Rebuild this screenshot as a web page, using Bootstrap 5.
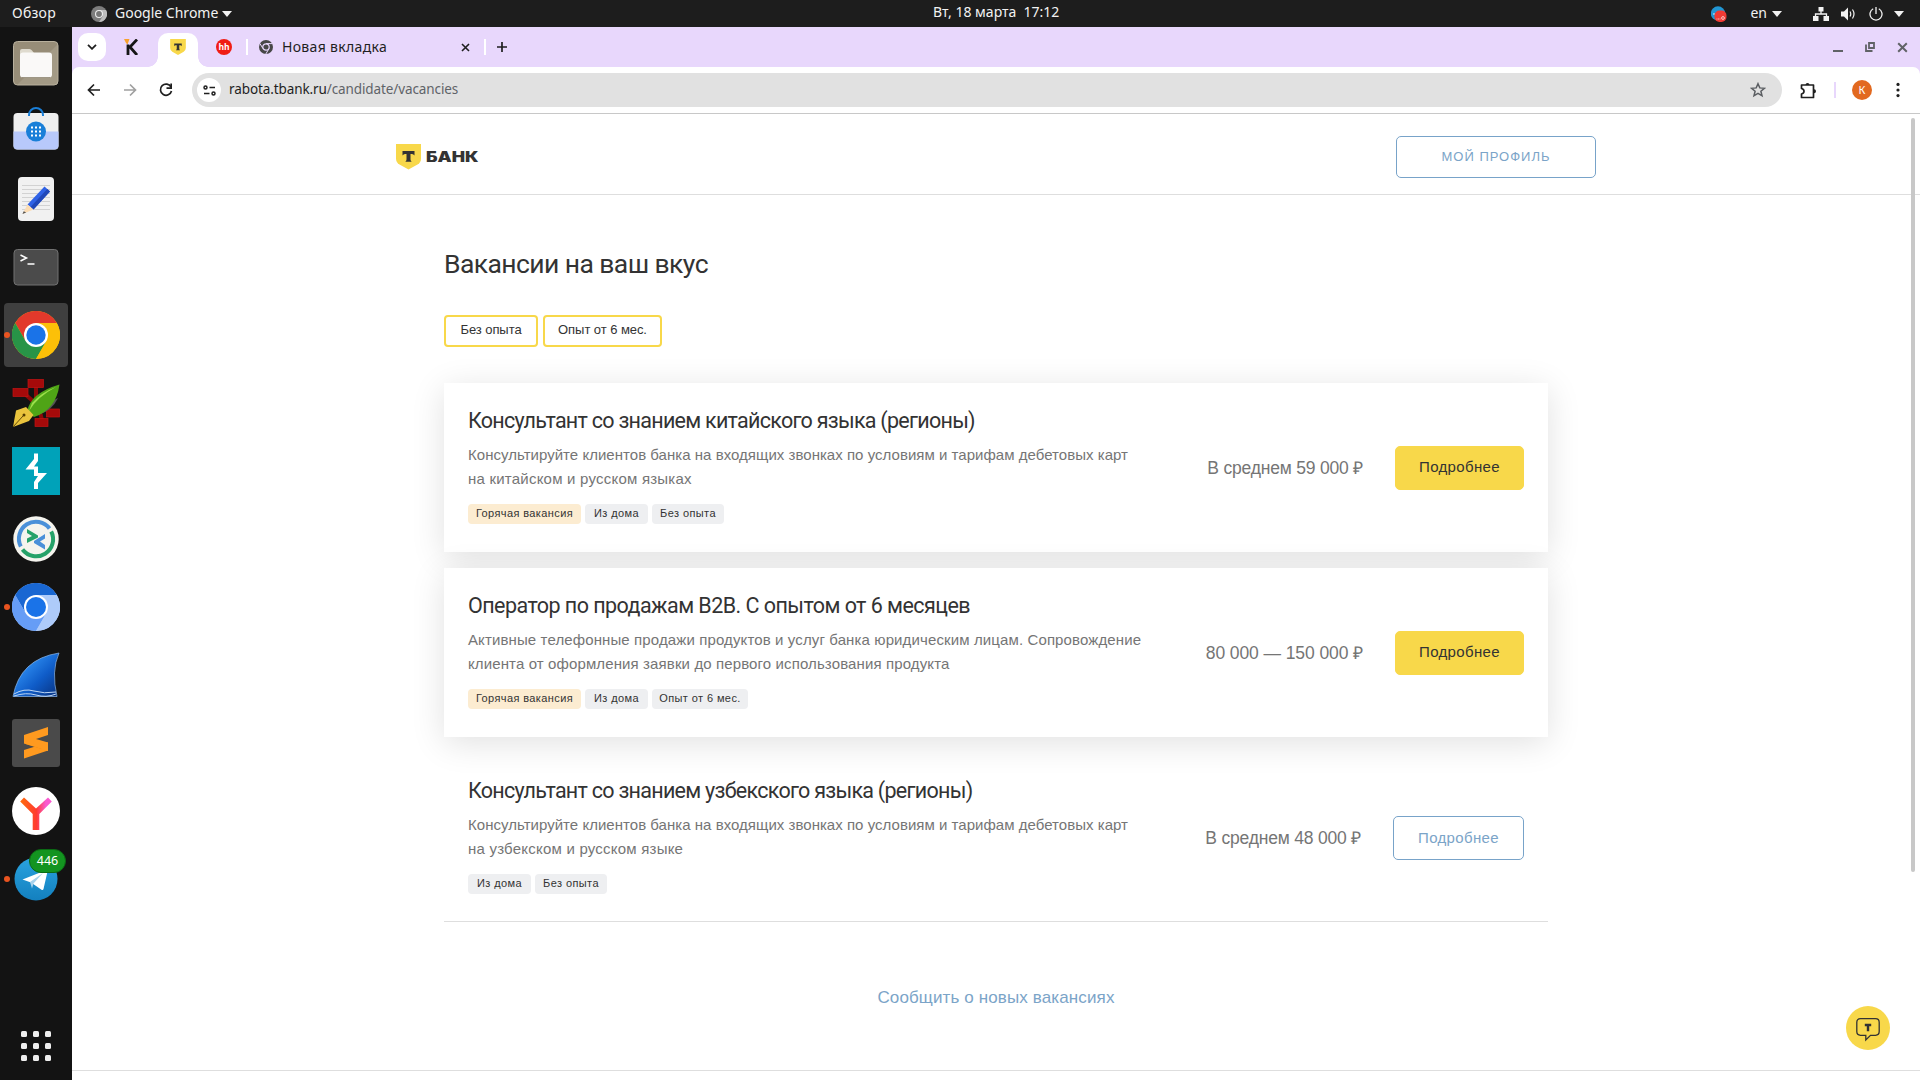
<!DOCTYPE html>
<html lang="ru">
<head>
<meta charset="utf-8">
<title>Вакансии</title>
<link href="https://cdn.jsdelivr.net/npm/bootstrap@5.3.0/dist/css/bootstrap.min.css" rel="stylesheet">
<style>
html,body{height:1080px;overflow:hidden}
body{font-family:"Liberation Sans",Arial,sans-serif;color:#333;background:#fff;width:1920px}
svg{display:block;flex:none}
.sysfont{font-family:"Noto Sans","Open Sans",sans-serif}
.topbar{height:27px;background:#1d1d1d;color:#f2f2f2;font-size:14px;line-height:25px;white-space:nowrap}
.topbar-left{width:933px;padding-left:12px;flex:none}
.topbar-left,.topbar-right{height:27px}
.topbar-left span,.topbar-right span{padding-bottom:2px}
.activities{letter-spacing:.26px}
.clock{white-space:pre}
.dock{width:72px;background:#131313;padding-top:4px;flex:none}
.dock-item{width:64px;height:64px;margin:0 4px 4px;border-radius:4px;flex:none}
.dock-item.current{background:#3f3f3f}
.run-dot{left:0;top:29px;width:6px;height:6px;border-radius:50%;background:#e95420}
.unread{left:25px;top:2px;width:37px;height:24px;border-radius:12px;background:#139420;color:#fff;font-size:12.5px;border:1px solid #0b6a14;line-height:22px}
.apps{padding-bottom:19px}
.tabstrip{height:40px;background:#e8d7fc;padding-left:6px}
.tab-search{width:28px;height:28px;border-radius:10px;background:#fff}
.tab-active{width:40px;height:34px;background:#fff;border-radius:10px 10px 0 0;margin:6px 18px 0 20px}
.tab-active::before,.tab-active::after{content:"";position:absolute;bottom:0;width:10px;height:10px}
.tab-active::before{left:-10px;background:radial-gradient(circle at 0 0,transparent 9.5px,#fff 10px)}
.tab-active::after{right:-10px;background:radial-gradient(circle at 100% 0,transparent 9.5px,#fff 10px)}
.hh{width:16px;height:16px;border-radius:50%;background:#f01d14;color:#fff;font:bold 8.5px/15px "Open Sans",sans-serif}
.tab-sep{width:2px;height:16px;background:#fff;margin-left:14px}
.tab-name{font-size:14px;color:#1f1f1f;white-space:nowrap;letter-spacing:.32px;padding-bottom:2px;margin-left:9px}
.toolwrap{background:#e8d7fc}
.toolbar{height:47px;background:#fff;border-bottom:1px solid #c8c8c8;border-radius:7px 7px 0 0;padding-left:14px}
.omnibox{width:1590px;height:34px;border-radius:17px;background:#e1e1e1;padding:0 16px 0 5px;margin-left:18px}
.site-info{width:24px;height:24px;border-radius:50%;background:#fff}
.url{font-size:13.5px;color:#1f1f1f;white-space:nowrap;letter-spacing:-.1px;padding-bottom:2px;margin-left:8px}
.url span{color:#5f6368}
.ext-sep{width:2px;height:16px;background:#e8d7fc;margin:0 16px 0 17px}
.avatar{width:20px;height:20px;border-radius:50%;background:#e2691f;color:#fff;font-size:11px;line-height:20px}
.site-header{height:81px;border-bottom:1px solid #dedede;padding-top:6px}
.site-wide{width:1200px}
.btn-site{--bs-btn-border-radius:5px;--bs-btn-color:#7ba4c8;--bs-btn-border-color:#78a3c9;--bs-btn-padding-x:0;--bs-btn-padding-y:0;white-space:nowrap}
.btn-profile{width:200px;height:42px;font-size:13px;line-height:40px;letter-spacing:1px}
.content-col{width:1104px}
.page-title{font-family:Roboto,sans-serif;font-size:26.5px;line-height:32px;font-weight:400;letter-spacing:-.58px;margin:53px 0 35px;white-space:nowrap}
.filters{gap:5px;margin-bottom:36px}
.filter-chip{width:119px;height:32px;border:2px solid #f8d84a;border-radius:4px;font-size:13px;line-height:26px;letter-spacing:-.06px;color:#333;text-align:center;white-space:nowrap}
.filter-chip.short{width:94px}
.vacancy{height:169px;padding:24px 24px 0;background:#fff}
.vacancy.raised{box-shadow:0 6px 32px rgba(0,0,0,.12);margin-bottom:16px}
.vacancy.flat{border-bottom:1px solid #dedede;background:none}
.vac-title{font-family:Roboto,sans-serif;font-size:21.5px;line-height:28px;font-weight:400;letter-spacing:-.73px;margin:0 0 8px;white-space:nowrap}
.vac-title.mixed{letter-spacing:-.55px}
.vac-text{font-size:15px;line-height:24px;color:#757575;margin:0 0 13px;white-space:nowrap;letter-spacing:.12px}
.vac-text .tight{letter-spacing:.03px}
.vac-text .loose{letter-spacing:.22px}
.vac-tag{height:20px;border-radius:4px;background:#eeeff1;font-size:11px;line-height:19px;letter-spacing:.4px;text-align:center;white-space:nowrap}
.vac-tag.hot{background:#fcecd1;width:113px}
.tag-home{width:63px}
.tag-novice{width:72px}
.tag-exp{width:96px}
.salary{font-size:17.5px;line-height:24px;color:#757575;white-space:nowrap;letter-spacing:-.2px}
.salary.range{letter-spacing:-.09px}
.vac-side{height:44px;margin-top:39px;gap:32px}
.btn-more{width:129px;height:44px;font-size:15px;line-height:40px;letter-spacing:.35px}
.btn-fill{--bs-btn-bg:#f8d84a;--bs-btn-border-color:#f8d84a;--bs-btn-color:#333}
.btn-line{width:131px;line-height:42px}
.notify{font-size:17px;color:#7ba4c8;text-decoration:none;white-space:nowrap;line-height:24px;letter-spacing:.12px;margin-top:64px}
.page-end{border-top:1px solid #dedede;height:10px}
.scroll-thumb{left:1911px;top:118px;width:4px;height:754px;border-radius:2px;background:#c8c8c8}
.chat-btn{left:1846px;top:1006px;width:44px;height:44px}
</style>
<script src="https://cdn.jsdelivr.net/npm/bootstrap@5.3.0/dist/js/bootstrap.bundle.min.js"></script>
</head>
<body class="d-flex flex-column position-relative">
<svg width="0" height="0" class="position-absolute"><defs>
<g id="shield"><path d="M0 0h25v14.500q0 4-3.500 6L12.500 25.500 3.500 20.500Q0 18.500 0 14.500z" fill="#f8d84a"/><path d="M6.500 7h12v4.500q-1-1.500-2.500-1.500h-1.500v5.500q0 1.500 1.200 2.300H9.300q1.200-.8 1.200-2.300V10H9q-1.500 0-2.500 1.500z" fill="#333"/></g>
</defs></svg>

<header class="topbar sysfont d-flex align-items-center">
  <div class="topbar-left d-flex align-items-center">
    <span class="activities">Обзор</span>
    <svg width="16" height="16" viewBox="0 0 16 16" style="margin-left:35px"><circle cx="8" cy="8" r="8" fill="#7d7d7d"/><path d="M8 4h7a8 8 0 0 1-7 12l4-6z" fill="#bdbdbd"/><circle cx="8" cy="8" r="4" fill="#eee"/><circle cx="8" cy="8" r="2.900" fill="#777"/></svg>
    <span class="ms-1 ps-1">Google Chrome</span>
    <svg width="10" height="6" viewBox="0 0 10 6" class="ms-1"><path d="M0 0h10L5 6z" fill="#f2f2f2"/></svg>
  </div>
  <span class="clock pb-1">Вт, 18 марта  17:12</span>
  <div class="topbar-right flex-grow-1 d-flex align-items-center justify-content-end" style="padding-right:16px">
    <svg width="16" height="16" viewBox="0 0 16 16"><circle cx="7" cy="7.500" r="7.200" fill="#2196d3"/><circle cx="3" cy="8" r=".8" fill="#fff"/><rect x="3.500" y="4.500" width="12" height="11.500" rx="5" fill="#f03a34"/><path d="M5.500 13h4" stroke="#f9b5b2" stroke-dasharray="1 .5"/><circle cx="12" cy="12" r="1.400" fill="none" stroke="#f9c5c2"/></svg>
    <span style="margin-left:23px">en</span>
    <svg width="10" height="6" viewBox="0 0 10 6" style="margin-left:5px"><path d="M0 0h10L5 6z" fill="#f2f2f2"/></svg>
    <svg width="16" height="14" viewBox="0 0 16 14" style="margin-left:31px"><path d="M5.500 0h5v4.500h-5zM0 9h5.500v5H0zM10.500 9H16v5h-5.500z" fill="#f2f2f2"/><path d="M8 4v3M2.500 9.500V7h11v2.500" fill="none" stroke="#f2f2f2" stroke-width="1.300"/></svg>
    <svg width="15" height="14" viewBox="0 0 15 14" style="margin-left:12px"><path d="M0 4.500h3L7 .5v13l-4-4H0z" fill="#f2f2f2"/><path d="M9 4.500q1.500 2.500 0 5M11.500 2.500q3 4.500 0 9" fill="none" stroke="#f2f2f2" stroke-width="1.200"/></svg>
    <svg width="14" height="14" viewBox="0 0 14 14" style="margin-left:13px"><path d="M4.200 1.800A6 6 0 1 0 9.800 1.800M7 0v7" fill="none" stroke="#f2f2f2" stroke-width="1.300"/></svg>
    <svg width="10" height="6" viewBox="0 0 10 6" style="margin-left:11px"><path d="M0 0h10L5 6z" fill="#f2f2f2"/></svg>
  </div>
</header>

<div class="d-flex flex-grow-1">
<nav class="dock d-flex flex-column">
  <div class="dock-item d-flex align-items-center justify-content-center"><svg width="48" height="48"><rect x="1.500" y="2.500" width="44.500" height="43.500" rx="4" fill="#978d78"/><path d="M5 46 46 5v37q0 4-4 4z" fill="#a39a86"/><rect x="1.500" y="2.500" width="44.500" height="43.500" rx="4" fill="none" stroke="#b8b09d"/><path d="M8 12q0-2 2-2h7.500q1.500 0 2.500 1.500l2 2.500V20H8z" fill="#dfdbcf"/><rect x="8" y="13.500" width="32" height="25" rx="3" fill="#faf9f8"/><path d="M10 38.500h28" stroke="#7d745f" stroke-width=".6"/></svg></div>
  <div class="dock-item d-flex align-items-center justify-content-center"><svg width="48" height="48"><rect x="1.500" y="6" width="45" height="36.500" rx="4" fill="#efefef"/><path d="M1.500 24.500h45v14q0 4-4 4h-37q-4 0-4-4z" fill="#b8c9fb"/><path d="M17 9V8a7 7 0 0 1 14 0v1" fill="none" stroke="#1a7fd8" stroke-width="2"/><circle cx="24" cy="24.500" r="10" fill="#1a7fd8"/><path d="M19 20.500h10M19 24.500h10M19 28.500h10" stroke="#fff" stroke-width="2" stroke-dasharray="2 2"/></svg></div>
  <div class="dock-item d-flex align-items-center justify-content-center"><svg width="48" height="48"><rect x="6" y="2" width="36" height="44" rx="4" fill="#f1f1f1"/><path d="M10 10.500h28M10 14.500h28M10 18.500h28M10 22.500h28M10 26.500h28M10 30.500h28M10 34.500h28" stroke="#d2d2d2"/><path d="M15.500 29.500 32.500 11.500l5.500 5L21.500 34.500z" fill="#2f62e6"/><path d="M18.500 32 35.300 14l2.700 2.500L21.500 34.500z" fill="#2148b8"/><path d="M15.500 29.500l6 5L10.500 39z" fill="#fbdcb4"/><path d="M11.700 36.300l2.500 1.300-3.700 1.400z" fill="#555"/></svg></div>
  <div class="dock-item d-flex align-items-center justify-content-center"><svg width="48" height="48"><rect x="2" y="6.500" width="44" height="35.500" rx="3.500" fill="#4b4b4b" stroke="#727272"/><path d="M8.500 12l6 3-6 3M15.500 21h7" fill="none" stroke="#fff" stroke-width="1.500"/></svg></div>
  <div class="dock-item current position-relative d-flex align-items-center justify-content-center"><i class="run-dot position-absolute"></i><svg width="48" height="48"><circle cx="24" cy="24" r="24" fill="#fcc008"/><path d="M3.200 12A24 24 0 0 1 44.800 12H24L13.600 30z" fill="#e2392b"/><path d="M3.200 12A24 24 0 0 0 24 48L34.400 30 24 24 13.600 30z" fill="#289447"/><path d="M24 12h20.800A24 24 0 0 1 24 48l10.400-18z" fill="#fcc008"/><circle cx="24" cy="24" r="12" fill="#fff"/><circle cx="24" cy="24" r="9.700" fill="#1a73e8"/></svg></div>
  <div class="dock-item d-flex align-items-center justify-content-center"><svg width="48" height="48"><path d="M24 7v12M14 16l8 7M34 30l6 4M28 33l2 8" stroke="#8d0808" stroke-width="4"/><g fill="#a50a0a" stroke="#c51313" stroke-width=".7"><rect x="16" y=".5" width="15.500" height="8" /><rect x="1" y="9.500" width="15" height="8"/><rect x="34.500" y="30" width="13" height="8"/><rect x="23" y="39.500" width="13" height="8"/></g><path d="M26 36q14-4 20-17l-8 4z" fill="#555"/><path d="M15 33Q18 14 47.500 5.500 44 31 22 38z" fill="#4fa416"/><path d="M17 32Q25 18 44 8 30 13 20 24z" fill="#9be04a"/><path d="M4 31.500l10-3.500 7.500 8-4.500 6L1 48z" fill="#eac43d"/><path d="M1 48 11 37" stroke="#664b07"/><circle cx="12" cy="36" r="1.500" fill="#553c00"/></svg></div>
  <div class="dock-item d-flex align-items-center justify-content-center"><svg width="48" height="48"><path d="M0 0h48v48H0z" fill="#00a2b9"/><path d="M22 6.500h4V14l-4 5.500h4V26h9L26 36v6h-4v-7l4-6h-4v-6.500h-8.500L22 12z" fill="#fff"/></svg></div>
  <div class="dock-item d-flex align-items-center justify-content-center"><svg width="48" height="48"><circle cx="24" cy="24" r="22.700" fill="#f5f4ee"/><g fill="none" stroke-width="4"><path d="M8.800 31.500A17 17 0 0 1 37.500 13.500" stroke="#4a90d9"/><path d="M39.200 16.500A17 17 0 0 1 10.500 34.500" stroke="#26a269"/></g><path d="M15 14l11 6.500v2L15 28v-4.500l5-2.500-5-3z" fill="#26a269"/><path d="M33 19v4.500l-5 3 5 3.500v4.500L22 28v-2z" fill="#4a90d9"/></svg></div>
  <div class="dock-item position-relative d-flex align-items-center justify-content-center"><i class="run-dot position-absolute"></i><svg width="48" height="48"><circle cx="24" cy="24" r="24" fill="#aecbfa"/><path d="M3.200 12A24 24 0 0 1 44.800 12H24L13.600 30z" fill="#1967d2"/><path d="M3.200 12A24 24 0 0 0 24 48L34.400 30 24 24 13.600 30z" fill="#669df6"/><path d="M24 12h20.800A24 24 0 0 1 24 48l10.400-18z" fill="#aecbfa"/><circle cx="24" cy="24" r="12" fill="#fff"/><circle cx="24" cy="24" r="10" fill="#1a73e8"/></svg></div>
  <div class="dock-item d-flex align-items-center justify-content-center"><svg width="48" height="48"><defs><linearGradient id="fin" x1="0" y1="0" x2="1" y2="1"><stop offset=".25" stop-color="#2d8cf0"/><stop offset=".6" stop-color="#0f5cc8"/><stop offset="1" stop-color="#08307c"/></linearGradient></defs><path d="M1 45.500Q8 8 47 2q-8 18-2 43.500z" fill="url(#fin)" stroke="#8db8ea" stroke-width=".7"/><path d="M2 43q10-6 20-3t22 1M2 45q12-4 22-1t20-1" fill="none" stroke="#bcd6f5" stroke-width="1"/></svg></div>
  <div class="dock-item d-flex align-items-center justify-content-center"><svg width="48" height="48"><rect width="48" height="48" rx="3" fill="#4a4a4a"/><path d="M36 23.500 12 31v8.500l24-8z" fill="#ff9a1f"/><path d="M12 24.500 30 30l6-2v-4.500z" fill="#e3800c"/><path d="M36 8 12 16v8.500l24 7.500v-8.500L24 20l12-4z" fill="#ff9a1f"/></svg></div>
  <div class="dock-item d-flex align-items-center justify-content-center"><svg width="48" height="48"><defs><linearGradient id="yg" gradientUnits="userSpaceOnUse" x1="9" y1="12" x2="40" y2="12"><stop offset="0" stop-color="#ff6a0d"/><stop offset=".5" stop-color="#ff3b30"/><stop offset=".8" stop-color="#f95ad0"/></linearGradient></defs><circle cx="24" cy="24" r="24" fill="#fff"/><path d="M8.200 14.500 12 10.500 24 21.500 36 10.500l3.800 4L27.300 27v16h-6.600V27z" fill="url(#yg)"/></svg></div>
  <div class="dock-item position-relative d-flex align-items-center justify-content-center"><i class="run-dot position-absolute"></i><svg width="48" height="48"><defs><linearGradient id="tg" x1="0" y1="0" x2="0" y2="1"><stop offset="0" stop-color="#2aa3df"/><stop offset="1" stop-color="#1380bf"/></linearGradient></defs><circle cx="24" cy="24" r="21.500" fill="url(#tg)"/><path d="M10.500 24.500 34.500 15q1.500-.3 1 1.500L31.500 34q-.5 1.500-2 .7L19 27.500z" fill="#fff"/><path d="M18 27l13-9-9.500 10.500-1.500 5z" fill="#a8d2ec"/></svg><span class="unread sysfont position-absolute text-center">446</span></div>
  <div class="apps mt-auto d-flex justify-content-center"><svg width="30" height="30"><g fill="#efefef"><rect width="6" height="6" rx="1.500"/><rect x="12" width="6" height="6" rx="1.500"/><rect x="24" width="6" height="6" rx="1.500"/><rect y="12" width="6" height="6" rx="1.500"/><rect x="12" y="12" width="6" height="6" rx="1.500"/><rect x="24" y="12" width="6" height="6" rx="1.500"/><rect y="24" width="6" height="6" rx="1.500"/><rect x="12" y="24" width="6" height="6" rx="1.500"/><rect x="24" y="24" width="6" height="6" rx="1.500"/></g></svg></div>
</nav>

<div class="d-flex flex-column flex-grow-1">
<div class="tabstrip d-flex align-items-center sysfont">
  <div class="tab-search d-flex align-items-center justify-content-center"><svg width="10" height="6" viewBox="0 0 10 6"><path d="M1 .8l4 4 4-4" fill="none" stroke="#1f1f1f" stroke-width="1.800"/></svg></div>
  <svg width="14" height="16" viewBox="0 0 14 16" style="margin-left:18px"><path d="M0 0h5.500L3.500 5.500 2 4z" fill="#f7a12c"/><path d="M4 5.500V16M13 .5 6 8l7 8" fill="none" stroke="#161616" stroke-width="2.800"/></svg>
  <div class="tab-active position-relative d-flex align-items-center justify-content-center"><svg width="16" height="16" viewBox="0 0 25 25.500" style="margin-top:-6px"><use href="#shield"/></svg></div>
  <div class="hh text-center">hh</div>
  <div class="tab-sep"></div>
  <svg width="14" height="14" viewBox="0 0 14 14" style="margin-left:11px"><circle cx="7" cy="7" r="7" fill="#474747"/><circle cx="7" cy="7" r="3.200" fill="#474747" stroke="#e8d7fc" stroke-width="1.200"/><path d="M7 3.600h6.500M4 8.600.9 3.500M10 8.600 6.800 14" stroke="#e8d7fc" stroke-width="1"/></svg>
  <span class="tab-name">Новая вкладка</span>
  <svg width="9" height="9" viewBox="0 0 9 9" style="margin-left:74px"><path d="M1 1l7 7M8 1 1 8" stroke="#1f1f1f" stroke-width="1.600"/></svg>
  <div class="tab-sep"></div>
  <svg width="12" height="12" viewBox="0 0 12 12" style="margin-left:10px"><path d="M6 1v10M1 6h10" stroke="#1f1f1f" stroke-width="1.700"/></svg>
  <div class="ms-auto d-flex align-items-center" style="padding-right:12px">
    <svg width="10" height="10" viewBox="0 0 10 10"><path d="M0 9h10" stroke="#606266" stroke-width="2"/></svg>
    <svg width="10" height="10" viewBox="0 0 10 10" style="margin-left:22px"><path d="M1 2.500V9h6.500M4 1h5v5H4z" fill="none" stroke="#606266" stroke-width="1.800"/></svg>
    <svg width="11" height="11" viewBox="0 0 11 11" style="margin-left:22px"><path d="M1.200 1.200l8.600 8.600M9.800 1.200 1.200 9.800" stroke="#606266" stroke-width="2"/></svg>
  </div>
</div>
<div class="toolwrap"><div class="toolbar sysfont d-flex align-items-center">
  <svg width="16" height="16" viewBox="0 0 16 16"><path d="M14 8H3M8 2.500 2.500 8 8 13.500" fill="none" stroke="#1f1f1f" stroke-width="1.700"/></svg>
  <svg width="16" height="16" viewBox="0 0 16 16" style="margin-left:20px"><path d="M2 8h11M8 2.500 13.500 8 8 13.500" fill="none" stroke="#a0a0a0" stroke-width="1.700"/></svg>
  <svg width="16" height="16" viewBox="0 0 16 16" style="margin-left:20px"><path d="M13 5A5.600 5.600 0 1 0 13.500 9" fill="none" stroke="#1f1f1f" stroke-width="1.700"/><path d="M14 1.500V7H8.500V5.300h3.800V1.500z" fill="#1f1f1f"/></svg>
  <div class="omnibox d-flex align-items-center">
    <div class="site-info d-flex align-items-center justify-content-center"><svg width="13" height="11" viewBox="0 0 13 11" fill="none" stroke="#1f1f1f" stroke-width="1.500"><circle cx="2.500" cy="2.500" r="1.500"/><path d="M6.500 2.500H12M1 8.500h5.500"/><circle cx="10.500" cy="8.500" r="1.500"/></svg></div>
    <span class="url">rabota.tbank.ru<span>/candidate/vacancies</span></span>
    <svg class="ms-auto" width="16" height="16" viewBox="0 0 16 16"><path d="M8 1.700l1.800 4.200 4.600.4-3.500 3 1.100 4.500L8 11.400l-4 2.400 1.100-4.500-3.500-3 4.600-.4z" fill="none" stroke="#5b5e62" stroke-width="1.500"/></svg>
  </div>
  <svg width="17" height="17" viewBox="0 0 17 17" style="margin-left:18px"><path d="M1.500 3h12v12.500h-12v-3.500q2.500-.5 2.500-2.700T1.500 6.500z" fill="none" stroke="#1f1f1f" stroke-width="1.700" stroke-linejoin="round"/><path d="M5.500 3a2 2 0 0 1 4 0zM14 7.200a2 2 0 0 1 0 4z" fill="#1f1f1f"/></svg>
  <div class="ext-sep"></div>
  <div class="avatar text-center">К</div>
  <svg width="4" height="16" viewBox="0 0 4 16" style="margin-left:24px"><g fill="#1f1f1f"><circle cx="2" cy="2.400" r="1.600"/><circle cx="2" cy="8" r="1.600"/><circle cx="2" cy="13.600" r="1.600"/></g></svg>
</div></div>

<main class="flex-grow-1 d-flex flex-column bg-white">
  <div class="site-header d-flex justify-content-center">
    <div class="site-wide d-flex align-items-center justify-content-between">
      <svg width="84" height="26" viewBox="0 0 84 26"><use href="#shield"/><text x="30" y="17.500" font-family="Inter,sans-serif" font-weight="900" font-size="14.200" textLength="52.500" lengthAdjust="spacingAndGlyphs" fill="#333">БАНК</text></svg>
      <a class="btn btn-site btn-profile">МОЙ ПРОФИЛЬ</a>
    </div>
  </div>
  <div class="content-col mx-auto d-flex flex-column flex-grow-1">
    <h1 class="page-title">Вакансии на ваш вкус</h1>
    <div class="filters d-flex"><div class="filter-chip short">Без опыта</div><div class="filter-chip">Опыт от 6 мес.</div></div>

    <article class="vacancy raised d-flex justify-content-between">
      <div>
        <h2 class="vac-title">Консультант со знанием китайского языка (регионы)</h2>
        <p class="vac-text"><span class="tight">Консультируйте клиентов банка на входящих звонках по условиям и тарифам дебетовых карт</span><br><span class="loose">на китайском и русском языках</span></p>
        <div class="d-flex gap-1"><span class="vac-tag hot">Горячая вакансия</span><span class="vac-tag tag-home">Из дома</span><span class="vac-tag tag-novice">Без опыта</span></div>
      </div>
      <div class="vac-side d-flex align-items-center"><span class="salary">В среднем 59 000 ₽</span><a class="btn btn-site btn-more btn-fill">Подробнее</a></div>
    </article>
    <article class="vacancy raised d-flex justify-content-between">
      <div>
        <h2 class="vac-title mixed">Оператор по продажам B2B. С опытом от 6 месяцев</h2>
        <p class="vac-text">Активные телефонные продажи продуктов и услуг банка юридическим лицам. Сопровождение<br>клиента от оформления заявки до первого использования продукта</p>
        <div class="d-flex gap-1"><span class="vac-tag hot">Горячая вакансия</span><span class="vac-tag tag-home">Из дома</span><span class="vac-tag tag-exp">Опыт от 6 мес.</span></div>
      </div>
      <div class="vac-side d-flex align-items-center"><span class="salary range">80 000 — 150 000 ₽</span><a class="btn btn-site btn-more btn-fill">Подробнее</a></div>
    </article>
    <article class="vacancy flat d-flex justify-content-between">
      <div>
        <h2 class="vac-title">Консультант со знанием узбекского языка (регионы)</h2>
        <p class="vac-text"><span class="tight">Консультируйте клиентов банка на входящих звонках по условиям и тарифам дебетовых карт</span><br><span class="loose">на узбекском и русском языке</span></p>
        <div class="d-flex gap-1"><span class="vac-tag tag-home">Из дома</span><span class="vac-tag tag-novice">Без опыта</span></div>
      </div>
      <div class="vac-side d-flex align-items-center"><span class="salary">В среднем 48 000 ₽</span><a class="btn btn-site btn-more btn-line">Подробнее</a></div>
    </article>
    <a class="notify align-self-center">Сообщить о новых вакансиях</a>
  </div>
  <footer class="page-end"></footer>
</main>
</div>
</div>
<div class="scroll-thumb position-absolute"></div>
<svg class="chat-btn position-absolute" viewBox="0 0 44 44"><circle cx="22" cy="22" r="22" fill="#f8d84a"/><path d="M14.500 12.700h15q3.700 0 3.700 3.700v9.200q0 3.700-3.700 3.700h-5L19.800 34v-4.700h-5.300q-3.700 0-3.700-3.700v-9.200q0-3.700 3.700-3.700z" fill="none" stroke="#333" stroke-width="1.300"/><path d="M18.800 17.800h6.400v2.500h-2v5h-2.400v-5h-2z" fill="#333"/></svg>
</body>
</html>
